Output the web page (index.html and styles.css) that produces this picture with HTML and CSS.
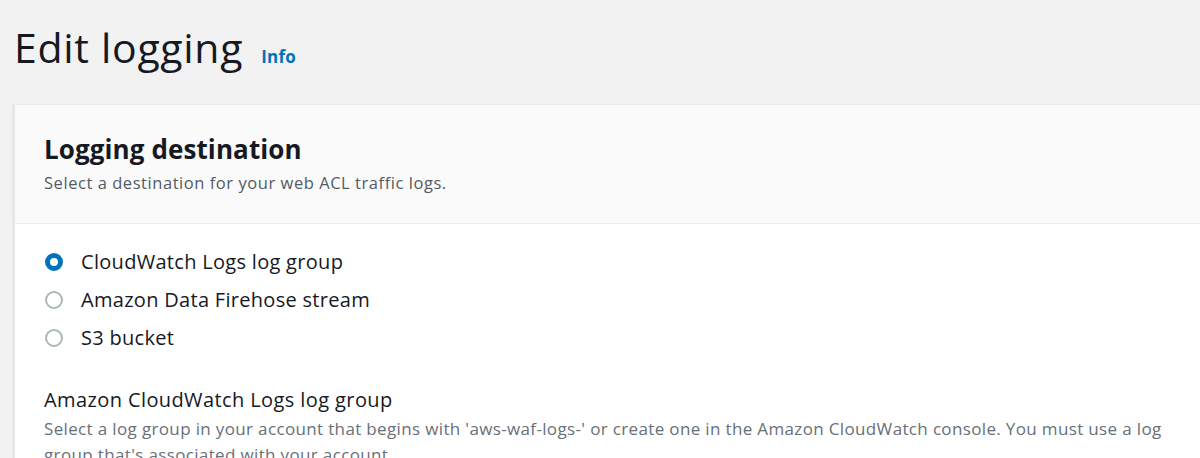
FILE: index.html
```html
<!DOCTYPE html>
<html lang="en">
<head>
<meta charset="utf-8">
<title>Edit logging</title>
<link rel="stylesheet" href="styles.css">
</head>
<body>
<div class="page">
  <header class="page-header">
    <h1 class="page-title">Edit logging</h1>
    <a class="info-link" href="#">Info</a>
  </header>
  <section class="card">
    <div class="card-header">
      <h2 class="card-title">Logging destination</h2>
      <p class="card-desc">Select a destination for your web ACL traffic logs.</p>
    </div>
    <div class="card-body">
      <div class="radio-group">
        <label class="radio-row"><span class="radio checked"></span><span class="radio-label">CloudWatch Logs log group</span></label>
        <label class="radio-row"><span class="radio"></span><span class="radio-label">Amazon Data Firehose stream</span></label>
        <label class="radio-row"><span class="radio"></span><span class="radio-label">S3 bucket</span></label>
      </div>
      <div class="field">
        <div class="field-label">Amazon CloudWatch Logs log group</div>
        <div class="field-desc">Select a log group in your account that begins with 'aws-waf-logs-' or create one in the Amazon CloudWatch console. You must use a log group that's associated with your account.</div>
      </div>
    </div>
  </section>
</div>
</body>
</html>
```

FILE: styles.css
```css
html, body {
  margin: 0;
  padding: 0;
  background: #f2f2f2;
  overflow: hidden;
  height: 458px;
}
body {
  font-family: "Open Sans", "Noto Sans", sans-serif;
  color: #16191f;
}
.page {
  padding-left: 13px;
}
.page-header {
  display: flex;
  align-items: baseline;
  gap: 18px;
  padding-top: 21px;
  height: 82px;
  box-sizing: border-box;
}
.page-title {
  margin: 0 0 0 1px;
  font-size: 41px;
  font-weight: 400;
  line-height: 52px;
  letter-spacing: 0.7px;
}
.info-link {
  color: #0073bb;
  font-weight: 700;
  font-size: 17px;
  letter-spacing: 0.2px;
  text-decoration: none;
}
.card {
  margin-right: -40px;
  background: #ffffff;
  border-left: 2px solid #e6e6e6;
  border-top: 1px solid #eaeaea;
  box-shadow: -1px 0 1px rgba(0,0,0,0.04);
  margin-top: 22px;
}
.card-header {
  background: #fafafa;
  border-bottom: 1px solid #eaeded;
  padding: 26px 29px 0;
  height: 119px;
  box-sizing: border-box;
}
.card-title {
  margin: 0;
  font-size: 26px;
  font-weight: 700;
  line-height: 36px;
  letter-spacing: 0.1px;
}
.card-desc {
  margin: 5px 0 0;
  font-size: 16.5px;
  line-height: 22px;
  letter-spacing: 0.55px;
  color: #545b64;
}
.card-body {
  padding: 25px 29px 0;
}
.radio-group {
  display: flex;
  flex-direction: column;
  gap: 12px;
}
.radio-row {
  display: flex;
  align-items: center;
  gap: 18px;
  height: 26px;
}
.radio {
  width: 18px;
  height: 18px;
  border-radius: 50%;
  border: 2px solid #aab7b8;
  box-sizing: border-box;
  background: #fff;
  margin-left: 1px;
}
.radio.checked {
  border: 5px solid #0073bb;
}
.radio-label {
  font-size: 20px;
  line-height: 26px;
  letter-spacing: 0.3px;
  color: #16191f;
}
.field {
  margin-top: 36px;
}
.field-label {
  font-size: 20px;
  line-height: 26px;
  letter-spacing: 0.4px;
  color: #16191f;
}
.field-desc {
  margin-top: 3px;
  font-size: 17px;
  line-height: 26px;
  letter-spacing: 0.35px;
  color: #687078;
  max-width: 1132px;
}
```
